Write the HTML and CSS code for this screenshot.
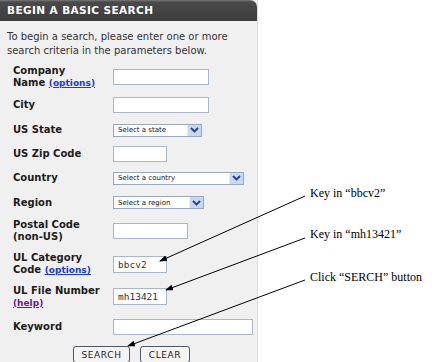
FILE: index.html
```html
<!DOCTYPE html>
<html lang="en">
<head>
    <meta charset="UTF-8">
    <title>Begin a Basic Search</title>
    <link rel="stylesheet" href="styles.css">
</head>
<body>

    <!-- Search panel -->
    <div class="panel">
        <h2 class="panel-title">BEGIN A BASIC SEARCH</h2>
        <p class="intro">To begin a search, please enter one or more search criteria in the parameters below.</p>

        <div class="search-form">
            <div class="field-label">Company<br>Name <a href="#" class="link">(options)</a></div>
            <input type="text" class="text-input w-96">

            <div class="field-label">City</div>
            <input type="text" class="text-input w-96">

            <div class="field-label">US State</div>
            <div class="select w-89"><span>Select a state</span><span class="select-arrow"><svg width="9" height="6" viewBox="0 0 9 6"><path d="M1 1 L4.5 4.5 L8 1" fill="none" stroke="#1c3f94" stroke-width="1.8"/></svg></span></div>

            <div class="field-label">US Zip Code</div>
            <input type="text" class="text-input w-54">

            <div class="field-label">Country</div>
            <div class="select w-131"><span>Select a country</span><span class="select-arrow"><svg width="9" height="6" viewBox="0 0 9 6"><path d="M1 1 L4.5 4.5 L8 1" fill="none" stroke="#1c3f94" stroke-width="1.8"/></svg></span></div>

            <div class="field-label">Region</div>
            <div class="select w-91"><span>Select a region</span><span class="select-arrow"><svg width="9" height="6" viewBox="0 0 9 6"><path d="M1 1 L4.5 4.5 L8 1" fill="none" stroke="#1c3f94" stroke-width="1.8"/></svg></span></div>

            <div class="field-label">Postal Code<br>(non-US)</div>
            <input type="text" class="text-input w-75">

            <div class="field-label">UL Category<br>Code <a href="#" class="link">(options)</a></div>
            <input type="text" class="text-input w-54 tall" value="bbcv2">

            <div class="field-label">UL File Number<br><a href="#" class="link visited">(help)</a></div>
            <input type="text" class="text-input w-54 tall" value="mh13421">

            <div class="field-label">Keyword</div>
            <input type="text" class="text-input w-140">
        </div>

        <div class="actions">
            <button class="btn">SEARCH</button>
            <button class="btn">CLEAR</button>
        </div>
    </div>

    <!-- Callouts -->
    <svg class="callout-lines" width="439" height="362">
        <defs>
            <marker id="head" markerWidth="8" markerHeight="6" refX="7" refY="3" orient="auto" markerUnits="userSpaceOnUse">
                <path d="M0 0 L8 3 L0 6 Z" fill="#000"/>
            </marker>
        </defs>
        <line x1="305" y1="196" x2="160" y2="261" stroke="#000" stroke-width="1" marker-end="url(#head)"/>
        <line x1="305" y1="238" x2="166" y2="290" stroke="#000" stroke-width="1" marker-end="url(#head)"/>
        <line x1="305" y1="280" x2="128" y2="346" stroke="#000" stroke-width="1" marker-end="url(#head)"/>
    </svg>
    <div class="note note-1">Key in “bbcv2”</div>
    <div class="note note-2">Key in “mh13421”</div>
    <div class="note note-3">Click “SERCH” button</div>

</body>
</html>
```

FILE: styles.css
```css
/* Basic reset */
* {
    margin: 0;
    padding: 0;
    box-sizing: border-box;
}

body {
    font-family: "DejaVu Sans", Verdana, sans-serif;
    background: #fff;
    width: 439px;
    height: 362px;
    position: relative;
    overflow: hidden;
}

/* Grey search panel */
.panel {
    width: 258px;
    height: 362px;
    background: #f0f0f0;
    border-right: 1px solid #dcdcdc;
}

.panel-title {
    height: 21px;
    padding: 4px 0 0 7px;
    font-size: 10.5px;
    font-weight: bold;
    color: #fff;
    letter-spacing: 0.4px;
    background: linear-gradient(#7a7a7a 0, #4a4a4a 2px, #3c3c3c 100%);
    border-top-right-radius: 7px;
}

.intro {
    padding: 9px 8px 0 7px;
    font-size: 10px;
    line-height: 14px;
    color: #333;
}

/* Label / field grid */
.search-form {
    display: grid;
    grid-template-columns: 100px auto;
    grid-template-rows: 29px 27px 24px 24px 24px 25px 32px 34px 31px 29px;
    align-items: center;
    justify-items: start;
    padding-left: 13px;
    margin-top: 4px;
}

.field-label {
    font-size: 10px;
    font-weight: bold;
    line-height: 12px;
    color: #1c1c1c;
}

.link {
    color: #1a3ccf;
    font-size: 9px;
}

.link.visited {
    color: #6e1a8a;
}

.text-input {
    height: 16px;
    background: #fff;
    border: 1px solid #a9b8c9;
    font-family: "DejaVu Sans Mono", monospace;
    font-size: 9.5px;
    color: #333;
    padding: 0 4px;
    outline: none;
}

.text-input.tall {
    height: 17px;
}

.w-54 { width: 54px; }
.w-75 { width: 75px; }
.w-96 { width: 96px; }
.w-140 { width: 140px; }
.w-89 { width: 89px; }
.w-91 { width: 91px; }
.w-131 { width: 131px; }

/* Fake dropdowns */
.select {
    height: 13px;
    display: flex;
    align-items: center;
    justify-content: space-between;
    background: #fff;
    border: 1px solid #98a9c0;
    padding-left: 4px;
    font-family: "DejaVu Sans", sans-serif;
    font-size: 7px;
    color: #111;
}

.select-arrow {
    width: 14px;
    height: 11px;
    display: flex;
    align-items: center;
    justify-content: center;
    background: #c9d8f2;
    border-left: 1px solid #e4ecfa;
}

/* Buttons */
.actions {
    display: flex;
    gap: 10px;
    padding: 5px 0 0 73px;
}

.btn {
    height: 17px;
    background: #f4f4f4;
    border: 1px solid #4f5966;
    border-radius: 3px;
    font-family: "DejaVu Sans", sans-serif;
    font-size: 9px;
    letter-spacing: 0.6px;
    color: #222;
}

.btn:first-child {
    width: 57px;
}

.btn:last-child {
    width: 50px;
}

/* Callout notes */
.callout-lines {
    position: absolute;
    top: 0;
    left: 0;
}

.note {
    position: absolute;
    left: 310px;
    font-family: "Liberation Serif", "Times New Roman", serif;
    font-size: 12px;
    line-height: 14px;
    color: #000;
}

.note-1 { top: 186px; }
.note-2 { top: 227px; }
.note-3 { top: 270px; }
```
